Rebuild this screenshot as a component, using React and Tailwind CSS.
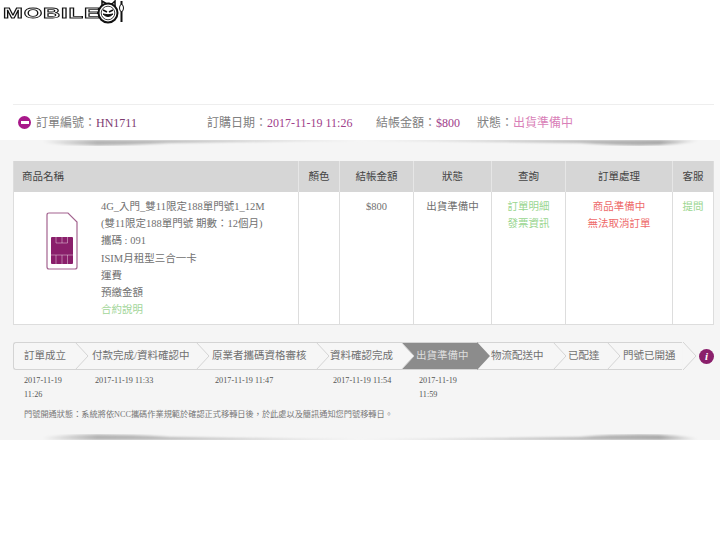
const serif = "font-['Liberation_Serif','Noto_Sans_CJK_TC',serif]";

const columns = [
  { label: "顏色", w: "w-[41px]" },
  { label: "結帳金額", w: "w-[74px]" },
  { label: "狀態", w: "w-[78px]" },
  { label: "查詢", w: "w-[74px]" },
  { label: "訂單處理", w: "w-[107px]" },
  { label: "客服", w: "w-[41px]" },
];

const productLines = [
  "4G_入門_雙11限定188單門號1_12M",
  "(雙11限定188單門號 期數：12個月)",
  "攜碼 : 091",
  "ISIM月租型三合一卡",
  "運費",
  "預繳金額",
];

const steps = [
  { label: "訂單成立", w: "w-[61px]", pl: "pl-[10px]" },
  { label: "付款完成/資料確認中", w: "w-[121px]", pl: "pl-[17px]" },
  { label: "原業者攜碼資格審核", w: "w-[120px]", pl: "pl-[16px]" },
  { label: "資料確認完成", w: "w-[85px]", pl: "pl-[14px]" },
  { label: "出貨準備中", w: "w-[76px]", pl: "pl-[15px]", active: true },
  { label: "物流配送中", w: "w-[76px]", pl: "pl-[14px]" },
  { label: "已配達", w: "w-[54px]", pl: "pl-[15px]" },
  { label: "門號已開通", w: "w-[76px]", pl: "pl-[16px]" },
];

const times = [
  { w: "w-[71px]", text: ["2017-11-19", "11:26"] },
  { w: "w-[120px]", text: ["2017-11-19 11:33"] },
  { w: "w-[118px]", text: ["2017-11-19 11:47"] },
  { w: "w-[86px]", text: ["2017-11-19 11:54"] },
  { w: "w-[60px]", text: ["2017-11-19", "11:59"] },
];

function Logo() {
  return (
    <div className="flex items-start h-[24px]">
      <span className="font-['Liberation_Sans',sans-serif] font-bold text-[14px] leading-none text-white tracking-[0.5px] mt-[6px] ml-[3px] inline-block w-[94px] scale-x-[1.7] origin-left [-webkit-text-stroke:0.8px_#111]">
        MOBILE
      </span>
      <svg width="28" height="24" viewBox="0 0 28 24">
        <path d="M5 7 L5 1 L10 4 Q12 3 15 4 L18 1 L18 7 Z" fill="#fff" stroke="#111" strokeWidth="1.5" />
        <circle cx="11" cy="13" r="9.500" fill="#fff" stroke="#111" strokeWidth="2" />
        <circle cx="11" cy="13" r="6.800" fill="none" stroke="#111" strokeWidth="0.800" />
        <path d="M6 10 L10 12 M16 10 L12 12" stroke="#111" strokeWidth="1.500" />
        <path d="M6 14 Q11 19 16 14 Q11 15.500 6 14 Z" fill="#111" stroke="#111" />
        <path d="M24.500 1 V22" stroke="#111" strokeWidth="2" />
        <ellipse cx="24.500" cy="8" rx="2" ry="3.500" fill="#fff" stroke="#111" />
      </svg>
    </div>
  );
}

function WedgeShadow({ flip, className }) {
  const id = flip ? "wedgeBottom" : "wedgeTop";
  return (
    <svg width="720" height="12" viewBox="0 0 720 12" className={`absolute left-0 ${flip ? "-scale-y-100" : ""} ${className}`}>
      <defs>
        <linearGradient id={id} x1="0" x2="1" y1="0" y2="0">
          <stop offset="0.030" stopColor="#f5f5f5" />
          <stop offset="0.110" stopColor="#b4b4b4" />
          <stop offset="0.300" stopColor="#c4c4c4" />
          <stop offset="0.500" stopColor="#dcdcdc" />
          <stop offset="0.800" stopColor="#bcbcbc" />
          <stop offset="0.930" stopColor="#ababab" />
          <stop offset="0.985" stopColor="#f5f5f5" />
        </linearGradient>
        <filter id={`${id}Blur`}><feGaussianBlur stdDeviation="1.200" /></filter>
      </defs>
      <path
        d="M22 0 Q70 9 170 3 L360 0 L580 3 Q660 9 708 0 Z"
        fill={`url(#${id})`}
        filter={`url(#${id}Blur)`}
      />
    </svg>
  );
}

function SimIcon() {
  return (
    <svg width="32" height="58" viewBox="0 0 32 58">
      <path d="M3 1 H22 L31 10 V55 Q31 57 29 57 H3 Q1 57 1 55 V3 Q1 1 3 1 Z" fill="#fff" stroke="#a3638f" strokeWidth="1.200" />
      <rect x="5" y="25" width="22" height="27" rx="1" fill="#8a1f6b" />
      <path d="M10 25 V31 H21.500 V25 M16 25 V31 M5 43 H27 M10 43 V52 M16 43 V52 M21.500 43 V52" fill="none" stroke="#fff" strokeOpacity="0.500" strokeWidth="0.800" />
    </svg>
  );
}

function Chevron({ active }) {
  return (
    <svg width="14" height="28" viewBox="0 0 14 28" className="absolute left-full top-[-1px] z-10">
      <path d="M0 0 L13 14 L0 28 Z" fill={active ? "#8c8c8c" : "#f6f6f6"} />
      {!active && <path d="M0 0 L13 14 L0 28" fill="none" stroke="#d4d4d4" />}
    </svg>
  );
}

export default function App() {
  return (
    <div className={`w-[720px] h-[540px] bg-white overflow-hidden ${serif}`}>
      <div className="h-[104px]">
        <Logo />
      </div>

      <div className="h-[36px] ml-[13px] mr-[6px] border-t border-[#eeeeee] flex items-center text-[12px] text-[#808080] whitespace-nowrap">
        <span className="w-[18px] h-[13px] flex items-center pl-[5px] shrink-0">
          <span className="w-[13px] h-[13px] rounded-full bg-[#a8188a] flex items-center justify-center shrink-0">
            <span className="w-[8px] h-[3px] bg-white" />
          </span>
        </span>
        <span className="ml-[5px] w-[171px]">訂單編號：<span className="text-[#7d3a70]">HN1711</span></span>
        <span className="w-[169px]">訂購日期：<span className="text-[#a0408a]">2017-11-19 11:26</span></span>
        <span className="w-[101px]">結帳金額：<span className="text-[#a0408a]">$800</span></span>
        <span>狀態：<span className="text-[#d97fb8]">出貨準備中</span></span>
      </div>

      <div className="relative h-[300px] bg-[#f5f5f5] pt-[21px] px-[13px]">
        <WedgeShadow className="top-0" />

        <div className="w-[701px] border border-[#dddddd] border-t-0 text-[10.500px] text-[#707070] bg-white">
          <div className="flex h-[31px] bg-[#d6d6d6] text-[#444444] leading-[31px] text-center">
            <div className="w-[284px] pl-[8px] text-left">商品名稱</div>
            {columns.map((col) => (
              <div key={col.label} className={`${col.w} border-l border-[#e6e6e6]`}>{col.label}</div>
            ))}
          </div>
          <div className="flex h-[132px] leading-[17.200px] text-center">
            <div className="w-[284px] flex text-left">
              <div className="w-[32px] shrink-0" />
              <div className="mt-[20px]"><SimIcon /></div>
              <div className="ml-[23px] pt-[6px] whitespace-nowrap">
                {productLines.map((line) => <div key={line}>{line}</div>)}
                <div className="text-[#a3d69a]">合約說明</div>
              </div>
            </div>
            <div className="w-[41px] border-l border-[#dddddd]" />
            <div className="w-[74px] border-l border-[#dddddd] pt-[6px]">$800</div>
            <div className="w-[78px] border-l border-[#dddddd] pt-[6px]">出貨準備中</div>
            <div className="w-[74px] border-l border-[#dddddd] pt-[6px] text-[#9ad690]">
              <div>訂單明細</div>
              <div>發票資訊</div>
            </div>
            <div className="w-[107px] border-l border-[#dddddd] pt-[6px] text-[#ee6a6a]">
              <div>商品準備中</div>
              <div>無法取消訂單</div>
            </div>
            <div className="w-[41px] border-l border-[#dddddd] pt-[6px] text-[#9ad690]">提問</div>
          </div>
        </div>

        <div className="flex items-center mt-[17px] w-[701px]">
          <div className="flex shrink-0 h-[28px] w-[669px] border border-r-0 border-[#d4d4d4] rounded-l-[3px] bg-[#f6f6f6] text-[10.500px] text-[#707070] leading-[26px] whitespace-nowrap">
            {steps.map((step) => (
              <div
                key={step.label}
                className={`relative shrink-0 ${step.w} ${step.pl} ${step.active ? "bg-[#8c8c8c] text-[#dddddd]" : ""}`}
              >
                {step.label}
                <Chevron active={step.active} />
              </div>
            ))}
          </div>
          <span className="shrink-0 ml-[17px] w-[15px] h-[15px] rounded-full bg-[#8a1f6b] text-white text-[11px] font-bold italic leading-[15px] text-center">i</span>
        </div>

        <div className="flex pl-[11px] mt-[4px] text-[8.200px] leading-[14px] text-[#555555] whitespace-nowrap h-[31px]">
          {times.map((t) => (
            <div key={t.text[0] + t.text[t.text.length - 1]} className={t.w}>
              {t.text.map((line) => <div key={line}>{line}</div>)}
            </div>
          ))}
        </div>
        <div className="pl-[11px] mt-[4px] text-[8.200px] leading-[12px] text-[#777777] whitespace-nowrap">
          門號開通狀態：系統將依NCC攜碼作業規範於確認正式移轉日後，於此處以及簡訊通知您門號移轉日。
        </div>
        <WedgeShadow flip className="bottom-0" />
      </div>
    </div>
  );
}
